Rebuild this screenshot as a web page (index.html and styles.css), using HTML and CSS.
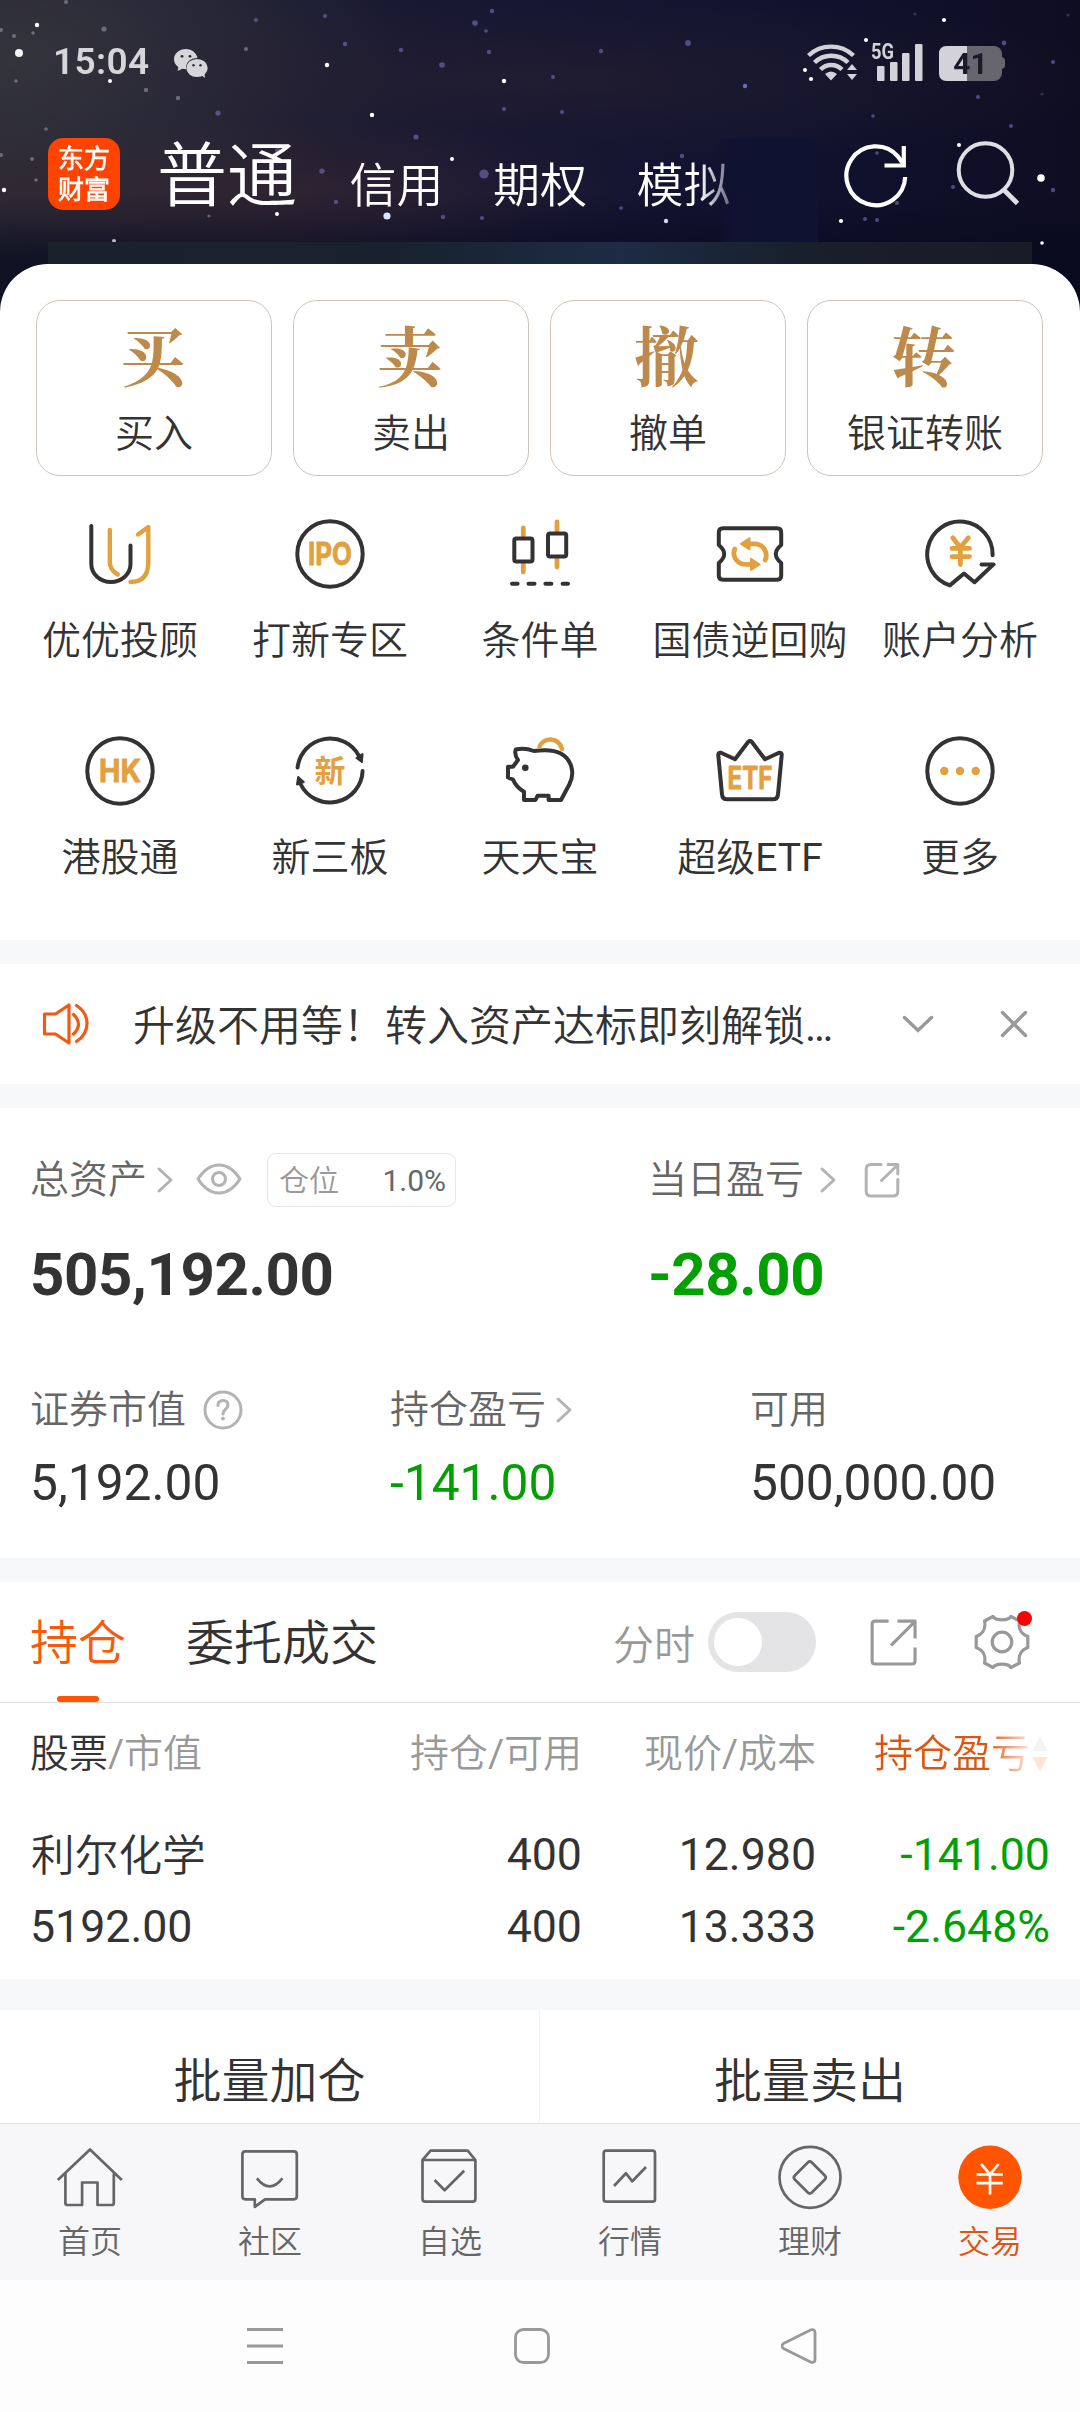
FILE: index.html
```html
<!DOCTYPE html>
<html lang="zh-CN">
<head>
<meta charset="utf-8">
<title>交易</title>
<link rel="stylesheet" href="styles.css">
</head>
<body>
<div class="app">
  <header class="hero">
    <svg class="sky" viewBox="0 0 1080 312" aria-hidden="true">
      <g fill="#fff">
        <circle cx="19" cy="53" r="4" opacity=".95"/><circle cx="37" cy="25" r="2.2"/><circle cx="327" cy="65" r="2.2"/><circle cx="110" cy="81" r="2"/>
        <circle cx="504" cy="81" r="2.2"/><circle cx="372" cy="115" r="2.2"/><circle cx="452" cy="159" r="2"/><circle cx="4" cy="190" r="2.2"/>
        <circle cx="387" cy="216" r="3.6" fill="#dfe6ff"/><circle cx="277" cy="214" r="2"/><circle cx="114" cy="241" r="2" opacity=".7"/>
        <circle cx="944" cy="20" r="2.1"/><circle cx="866" cy="40" r="2"/><circle cx="805" cy="70" r="2"/><circle cx="811" cy="79" r="2.1"/>
        <circle cx="959" cy="145" r="2"/><circle cx="1041" cy="178" r="3.8"/><circle cx="841" cy="221" r="2.1"/><circle cx="666" cy="221" r="2.2" fill="#cdd6ff"/>
        <circle cx="1042" cy="243" r="1.8"/>
      </g>
      <g fill="#7468b4" opacity=".65">
        <circle cx="484" cy="174" r="4.6"/><circle cx="475" cy="23" r="2.8"/><circle cx="688" cy="43" r="3"/><circle cx="442" cy="65" r="2.8"/>
        <circle cx="489" cy="52" r="2.2"/><circle cx="492" cy="11" r="2.2"/><circle cx="486" cy="31" r="1.8"/><circle cx="401" cy="50" r="2.2"/>
        <circle cx="345" cy="44" r="2.2"/><circle cx="325" cy="16" r="2"/><circle cx="256" cy="20" r="2"/><circle cx="416" cy="137" r="2.6"/>
        <circle cx="322" cy="171" r="2.6"/><circle cx="218" cy="113" r="2.6"/><circle cx="504" cy="109" r="2"/><circle cx="443" cy="217" r="2.2"/>
        <circle cx="482" cy="218" r="2"/><circle cx="336" cy="202" r="2.2"/><circle cx="278" cy="151" r="3"/><circle cx="601" cy="51" r="2.2"/>
        <circle cx="553" cy="77" r="2"/><circle cx="745" cy="86" r="2.2" fill="#8fa0ff"/><circle cx="562" cy="112" r="2"/><circle cx="682" cy="156" r="2.2"/>
        <circle cx="621" cy="208" r="1.8"/><circle cx="877" cy="153" r="1.8"/><circle cx="897" cy="203" r="2"/><circle cx="865" cy="219" r="2"/>
        <circle cx="877" cy="220" r="2"/><circle cx="1053" cy="190" r="2.2"/><circle cx="953" cy="187" r="2"/><circle cx="1011" cy="126" r="2"/>
        <circle cx="1053" cy="62" r="2"/><circle cx="1004" cy="43" r="2.4"/><circle cx="978" cy="97" r="2"/><circle cx="873" cy="116" r="1.8"/>
      </g>
      <g fill="#a9a9c4" opacity=".5">
        <circle cx="104" cy="29" r="2.6"/><circle cx="33" cy="33" r="1.8"/><circle cx="14" cy="36" r="2"/><circle cx="246" cy="49" r="2"/>
        <circle cx="16" cy="81" r="1.8"/><circle cx="146" cy="90" r="2.2"/><circle cx="178" cy="98" r="2.2"/><circle cx="46" cy="129" r="1.8"/>
        <circle cx="32" cy="159" r="2"/><circle cx="36" cy="180" r="1.8"/><circle cx="66" cy="2" r="2"/><circle cx="1" cy="30" r="2"/><circle cx="1" cy="155" r="2"/>
        <circle cx="209" cy="216" r="1.6"/><circle cx="915" cy="14" r="1.6" opacity=".5"/><circle cx="1042" cy="94" r="1.6" opacity=".5"/><circle cx="1068" cy="15" r="1.6" opacity=".5"/>
      </g>
    </svg>
    <div class="status">
      <span class="clock">15:04</span>
      <svg class="wechat" width="34" height="29" viewBox="0 0 34 29">
        <path fill="#d6d6da" d="M12 0C5.300 0 0 4.500 0 10.200c0 3.300 1.700 6 4.400 7.900L3.600 22l4.600-2.200c1.300.3 2.500.5 3.900.5C11.500 13 16.500 8.800 23.500 8.900 22.500 4 17.800 0 12 0z"/>
        <ellipse cx="23" cy="19" rx="10.700" ry="9.100" fill="#d6d6da"/><path fill="#d6d6da" d="M26 25l5 4-.8-6z"/>
        <g fill="#2b2932"><circle cx="8" cy="7.300" r="1.400"/><circle cx="16" cy="7.300" r="1.400"/><circle cx="19.500" cy="16.200" r="1.200"/><circle cx="26.500" cy="16.200" r="1.200"/></g>
      </svg>
      <svg class="signals" width="200" height="50" viewBox="0 -10 200 50">
        <g fill="none" stroke="#d2d2d8" stroke-width="4.400">
          <path d="M2.500 13.500a33 33 0 0 1 45 0"/><path d="M8.500 20.500a24 24 0 0 1 33.500 0"/><path d="M14.500 27.500a15 15 0 0 1 21.500 0"/>
        </g>
        <path fill="#d2d2d8" d="M19 32q6-5 12 0l-6 6.500zM41 28l5-6 5 6zM41 32h10l-5 6z"/>
        <text class="net" x="65" y="17" textLength="23" lengthAdjust="spacingAndGlyphs">5G</text>
        <g fill="#d2d2d8"><rect x="71" y="24" width="7.500" height="15" rx="1"/><rect x="84" y="20" width="7.500" height="19" rx="1"/><rect x="96" y="11" width="7.500" height="28" rx="1"/><rect x="109" y="2" width="7.500" height="37" rx="1"/></g>
        <rect x="133" y="4" width="63" height="35" rx="8" fill="#67656e"/><path d="M196 15q3 1 3 3v6q0 2-3 3z" fill="#67656e"/>
        <path d="M141 4h20v35h-20q-8 0-8-8V12q0-8 8-8z" fill="#d2d2d8"/>
        <text class="charge" x="164.500" y="32" text-anchor="middle">41</text>
      </svg>
    </div>
    <div class="topbar">
      <div class="logo"><span>东方</span><span>财富</span></div>
      <nav class="accounts">
        <span class="account-on">普通</span><span>信用</span><span>期权</span><span class="account-fade">模拟</span>
      </nav>
      <svg class="refresh" width="66" height="66" viewBox="0 0 66 66" fill="none" stroke="#fff" stroke-width="4.200">
        <path d="M62.200 35A29.400 29.400 0 1 1 55 14.500l5 7"/><path d="M60.800 4v19.500H41.500"/>
      </svg>
      <svg class="search" width="66" height="66" viewBox="0 0 66 66" fill="none" stroke="#dedee4" stroke-width="4">
        <circle cx="29.500" cy="30" r="26.800"/><path d="M47.500 49.500L61.500 63.500" stroke-width="4.800"/>
      </svg>
    </div>
    <div class="strip"></div>
  </header>

  <main>
    <section class="sheet">
      <div class="cards">
        <div class="card"><b>买</b><span>买入</span></div>
        <div class="card"><b>卖</b><span>卖出</span></div>
        <div class="card"><b>撤</b><span>撤单</span></div>
        <div class="card"><b>转</b><span>银证转账</span></div>
      </div>
      <div class="tools">
        <div class="tool">
          <svg class="ico" viewBox="0 0 72 72"><path d="M7.300 8v38a19.600 18 0 0 0 39.200 0V27.500"/><path class="gold" d="M25.800 12v32q0 8 8 12.500M54 16.500L64.300 9v35q0 20-17.800 20"/></svg>
          <span>优优投顾</span></div>
        <div class="tool">
          <svg class="ico" viewBox="0 0 72 72"><circle cx="36" cy="36" r="32.700"/><text x="36" y="47" text-anchor="middle" textLength="44" lengthAdjust="spacingAndGlyphs">IPO</text></svg>
          <span>打新专区</span></div>
        <div class="tool">
          <svg class="ico" viewBox="0 0 72 72"><path class="gold wide" d="M19.300 10v8M19.300 46v8M53 4v9M53 41v8"/><rect x="10.300" y="20.500" width="18.200" height="23" rx="2"/><rect x="44" y="15.500" width="18.200" height="23" rx="2"/><path d="M8 65.700h5.600M24.500 65.700h6M41.400 65.700h6M58.600 65.700H64"/></svg>
          <span>条件单</span></div>
        <div class="tool">
          <svg class="ico" viewBox="0 0 72 72"><path d="M9 10.200h54q4.200 0 4.200 4.200V27q-10.800 9 0 18v12.600q0 4.200-4.200 4.200H9q-4.200 0-4.200-4.200V45q10.800-9 0-18V14.400q0-4.200 4.200-4.200z"/><path class="gold wide" d="M20.800 31C17.500 39 24 46.300 31 46.300h7M51.200 42C55 33 47.500 25.800 41 25.800h-7"/><path class="fill" d="M27 25.800l8.500-5.500v11zM45.500 46.300L37 40.800v11z"/></svg>
          <span>国债逆回购</span></div>
        <div class="tool">
          <svg class="ico" viewBox="0 0 72 72"><path d="M68.600 37.200A32.700 32.700 0 1 0 25.800 67.400L40 55.500l10.500 8.700 19-17.800H57.500"/><path class="gold wide" d="M28.800 19.800L36.300 29.500 44.300 19.800M28 30.400h17.500M28 38.600h17.500M36.400 30v16.500"/></svg>
          <span>账户分析</span></div>
        <div class="tool">
          <svg class="ico" viewBox="0 0 72 72"><circle cx="36" cy="36" r="32.700"/><text x="36" y="47" text-anchor="middle" textLength="42" lengthAdjust="spacingAndGlyphs">HK</text></svg>
          <span>港股通</span></div>
        <div class="tool">
          <svg class="ico" viewBox="0 0 72 72"><path d="M3.600 32.500A32.700 32.700 0 0 1 65 21M68.600 36A32.700 32.700 0 0 1 6.500 49"/><path class="dark" d="M62.500 23l6-4-.6 8zM3 49.500l1.200-7.500 5.500 5z"/><text class="han" x="36" y="47" text-anchor="middle">新</text></svg>
          <span>新三板</span></div>
        <div class="tool">
          <svg class="ico" viewBox="0 0 72 72"><path d="M14 25q-4-6-2.200-10.500 9-2 18 1.500 18-2.500 27 2.500c11 6 14.500 20 8.500 31L57 65H44.600v-4.200H33.500L31.500 65H20v-8.300Q12 52 9 44.500l-5-2V31.700h5z"/><circle class="dark" cx="21.300" cy="32.700" r="2.300"/><path class="gold" d="M35.500 11.500c4-9.500 19-10 22.500 2.500"/></svg>
          <span>天天宝</span></div>
        <div class="tool">
          <svg class="ico" viewBox="0 0 72 72"><path d="M7 17.800l14 6.500L34.500 6.500q1.500-1.700 3 0L51 24.300l14-6.500q3-.6 2.700 2.500L64 59.500q-.5 4.800-5 4.800H13q-4.500 0-5-4.800L4.300 20.300Q4 17.200 7 17.800z"/><text x="36" y="54" text-anchor="middle" textLength="45" lengthAdjust="spacingAndGlyphs">ETF</text></svg>
          <span>超级ETF</span></div>
        <div class="tool">
          <svg class="ico" viewBox="0 0 72 72"><circle cx="36" cy="36" r="32.700"/><g class="fill"><circle cx="20.300" cy="36" r="3.200"/><circle cx="36" cy="36" r="3.200"/><circle cx="51.700" cy="36" r="3.200"/></g></svg>
          <span>更多</span></div>
      </div>
    </section>

    <section class="notice">
      <svg width="48" height="44" viewBox="0 0 48 44" fill="none" stroke="#f05a14" stroke-width="3.200" stroke-linejoin="round" stroke-linecap="round"><path d="M2.500 12h11L27 3v38L13.500 32h-11zM31.500 12.500q10 9.500 0 19.500M34.500 3.500c14 9 14 27 0 36"/></svg>
      <p>升级不用等！转入资产达标即刻解锁…</p>
      <svg class="more" width="34" height="20" viewBox="0 0 34 20"><path d="M3.500 3.500L17 16.500l13.500-13"/></svg>
      <svg width="30" height="30" viewBox="0 0 30 30"><path d="M3.500 3.500l23 23M26.500 3.500l-23 23"/></svg>
    </section>

    <section class="assets">
      <div class="totals">
        <div>
          <div class="label">总资产
            <svg class="chev" width="18" height="28" viewBox="0 0 18 28"><path d="M3 3l12 11L3 25"/></svg>
            <svg class="eye" width="48" height="34" viewBox="0 0 48 34"><path d="M3 17Q12 3 24 3t21 14Q36 31 24 31T3 17z"/><circle cx="24" cy="17" r="6.500"/></svg>
            <span class="ratio"><i>仓位</i><em>1.0%</em></span>
          </div>
          <div class="big">505,192.00</div>
        </div>
        <div>
          <div class="label">当日盈亏
            <svg class="chev wide-gap" width="18" height="28" viewBox="0 0 18 28"><path d="M3 3l12 11L3 25"/></svg>
            <svg class="share" width="36" height="36" viewBox="0 0 36 36"><path d="M17 2.500H7q-4.800 0-4.800 4.800v22q0 4.800 4.800 4.800h22q4.800 0 4.800-4.800V17.500M24 2.500h9.800V12M33 3.500L17.500 18.500"/></svg>
          </div>
          <div class="big down">-28.00</div>
        </div>
      </div>
      <div class="details">
        <div>
          <div class="label small">证券市值
            <svg class="help" width="40" height="40" viewBox="0 0 40 40"><circle cx="20" cy="20" r="18"/><path d="M15 15.500q0-5 5-5t5 4.500c0 4-5 4.500-5 9"/><circle class="dot" cx="20" cy="28.500" r="1.900"/></svg>
          </div>
          <div class="value">5,192.00</div>
        </div>
        <div>
          <div class="label small">持仓盈亏
            <svg class="chev" width="18" height="28" viewBox="0 0 18 28"><path d="M3 3l12 11L3 25"/></svg>
          </div>
          <div class="value down">-141.00</div>
        </div>
        <div>
          <div class="label small">可用</div>
          <div class="value">500,000.00</div>
        </div>
      </div>
    </section>

    <section class="holdings">
      <div class="tabs">
        <span class="tab tab-on">持仓</span>
        <span class="tab">委托成交</span>
        <span class="chart-label">分时</span>
        <span class="switch"></span>
        <svg class="export" width="48" height="48" viewBox="0 0 48 48"><path d="M19 2.200H5.200q-3 0-3 3V43q0 3 3 3H43q3 0 3-3V29M28 2.200h18V20M45 3.500L21.500 27"/></svg>
        <span class="gear">
          <svg width="56" height="56" viewBox="0 0 56 56"><path d="M19 2.500C22 7 34 7 37 2.500L45.500 7C44 14 47 20 53.800 22.500v11C47 36 44 42 45.500 49L37 53.500c-3-4.500-15-4.500-18 0L10.500 49C12 42 9 36 2.200 33.500v-11C9 20 12 14 10.500 7z"/><circle cx="28" cy="28" r="9.800"/></svg>
          <span class="badge"></span>
        </span>
      </div>
      <div class="table">
        <div class="row head">
          <span><strong>股票</strong>/市值</span><span>持仓/可用</span><span>现价/成本</span>
          <span class="sorted"><u>持仓盈亏</u><svg width="20" height="36" viewBox="0 0 20 36"><path d="M2 15L10 1l8 14z" fill="#f3f3f4"/><path d="M2 21h16l-8 14z" fill="#ffe4d8"/></svg></span>
        </div>
        <div class="row"><span class="name">利尔化学</span><span>400</span><span>12.980</span><span class="down">-141.00</span></div>
        <div class="row"><span>5192.00</span><span>400</span><span>13.333</span><span class="down">-2.648%</span></div>
      </div>
    </section>

    <section class="actions"><span>批量加仓</span><span>批量卖出</span></section>
  </main>

  <nav class="tabbar">
    <div><svg class="nav" viewBox="0 0 72 72"><path d="M3.800 38L36 7.500 67.800 38M11.400 31.500V61q0 2 2 2h14.700V40.500h15.400V63h14.300q2 0 2-2V31.500"/></svg><span>首页</span></div>
    <div><svg class="nav" viewBox="0 0 72 72"><path d="M11.400 9.300h48.400q3 0 3 3v42q0 3-3 3H31l-10.200 7.500v-7.500h-9.400q-3 0-3-3v-42q0-3 3-3zM22.900 36.300q12.700 16 25.500 0"/></svg><span>社区</span></div>
    <div><svg class="nav" viewBox="0 0 72 72"><path d="M8.500 18l8-9.300h37.200l7.700 9.300v38.700q0 3-3 3H11.500q-3 0-3-3zM8.500 18h52.800M20.600 38l10 10.300 19.600-19.600"/></svg><span>自选</span></div>
    <div><svg class="nav" viewBox="0 0 72 72"><rect x="9.700" y="8.700" width="51.300" height="51" rx="2.500"/><path d="M20 44l12-12.700 6.300 8L52 25"/></svg><span>行情</span></div>
    <div><svg class="nav" viewBox="0 0 72 72"><circle cx="36" cy="35.300" r="30.500"/><path d="M33.800 20.500q2-2 4 0l13 13q2 2 0 4l-13 13q-2 2-4 0l-13-13q-2-2 0-4z"/></svg><span>理财</span></div>
    <div class="nav-on"><svg class="nav" viewBox="0 0 72 72"><circle cx="36" cy="35.300" r="31.700"/><path d="M27 22l9 10.300L44.500 22M22.500 32.300h26.300M22.500 41.200h26.300M36 32v20.500"/></svg><span>交易</span></div>
  </nav>
  <footer class="system">
    <svg width="36" height="36" viewBox="0 0 36 36"><path d="M0 1.500h36M0 18h36M0 34.500h36"/></svg>
    <svg width="36" height="36" viewBox="0 0 36 36"><rect x="1.500" y="1.500" width="33" height="33" rx="8"/></svg>
    <svg width="36" height="36" viewBox="0 0 36 36"><path d="M2.500 15.500L30 1.800q4-1 4 3v26.400q0 4-4 3L2.500 20.500q-3-2.500 0-5z"/></svg>
  </footer>
</div>
</body>
</html>
```
FILE: styles.css
```css
* { box-sizing: border-box; }
body {
  margin: 0;
  background: #fff;
  color: #333;
  font-family: Roboto, "Noto Sans CJK SC DemiLight", "Noto Sans CJK SC", sans-serif;
  font-weight: 400;
}
svg { display: block; flex: none; }
i, em { font-style: normal; }
u { text-decoration: none; }
p { margin: 0; }

.app { width: 1080px; height: 2412px; overflow: hidden; display: flex; flex-direction: column; }

/* header */
.hero {
  position: relative;
  height: 312px;
  margin-bottom: -48px;
  flex: none;
  background:
    radial-gradient(ellipse 420px 70px at 260px 190px, rgba(62, 42, 48, .55), transparent),
    radial-gradient(ellipse 560px 90px at 560px 80px, rgba(42, 34, 46, .55), transparent),
    radial-gradient(ellipse 380px 180px at 20px 60px, rgba(62, 62, 68, .6), transparent),
    linear-gradient(180deg, rgba(9, 10, 30, 0) 62%, rgba(7, 9, 28, .7) 85%),
    linear-gradient(90deg, #262532 0, #151533 48%, #10122f 72%, #0f0d22 100%);
}
.sky { position: absolute; inset: 0; width: 1080px; height: 312px; }
.status { position: relative; height: 84px; padding: 42px 74px 0 53px; display: flex; }
.clock { font-size: 37px; line-height: 40px; font-weight: 600; color: #d6d6da; width: 121px; letter-spacing: .4px; }
.wechat { margin-top: 7px; }
.signals { margin: -10px 0 0 auto; }
.net { font: 700 22px Roboto, sans-serif; fill: #d2d2d8; }
.charge { font: 700 30px Roboto, sans-serif; fill: #1b1a28; }
.topbar { position: relative; height: 158px; padding: 54px 54px 0 48px; display: flex; align-items: flex-start; }
.logo {
  width: 72px; height: 72px; border-radius: 15px; background: #ff4400; color: #fff;
  display: flex; flex-direction: column; justify-content: center; align-items: center;
  font-size: 26px; line-height: 31px; font-weight: 700; padding-top: 2px;
}
.accounts {
  display: flex; align-items: flex-start; width: 661px; height: 104px; margin-left: 37px; margin-right: 25px;
  font-size: 47px; line-height: 72px; padding-top: 12px; color: #fff;
  background: linear-gradient(90deg, transparent 560px, #101231 575px);
}
.accounts span { width: 96px; margin-left: 47.500px; }
.accounts .account-on { font-size: 70px; width: 145px; margin: -9px 0 0; }
.accounts .account-fade { background: linear-gradient(90deg, #fff 62px, #5b5c73 96px); -webkit-background-clip: text; background-clip: text; color: transparent; }
.refresh { margin: 4px 47px 0 0; }
.search { margin-top: 2px; }
.strip { height: 22px; margin: 0 48px; position: relative; background: linear-gradient(90deg, #19212b, #18222e 35%, #1d2b45 58%, #17202c 76%, #191c26); }

/* quick actions */
.sheet { position: relative; height: 676px; background: #fff; border-radius: 48px 48px 0 0; padding-top: 36px; }
.cards { display: grid; grid-template-columns: repeat(4, 1fr); gap: 21px; padding: 0 37px 0 36px; }
.card {
  height: 176px; border: 1px solid #cfc5bb; border-radius: 24px; padding-top: 20px;
  display: flex; flex-direction: column; align-items: center; font-size: 39px; line-height: 40px;
}
.card b { font-family: "Noto Serif CJK SC", "Source Han Serif SC", "Noto Sans CJK SC", serif; font-size: 65px; line-height: 64px; color: #bd8a4b; font-weight: 700; margin: 0 3px 29px 0; }
.tools { display: grid; grid-template-columns: repeat(5, 210px); row-gap: 72px; justify-content: center; margin-top: 42px; }
.tool { display: flex; flex-direction: column; align-items: center; font-size: 39px; line-height: 44px; gap: 29px; white-space: nowrap; }
.ico { width: 72px; height: 72px; fill: none; stroke: #333; stroke-width: 4px; stroke-linecap: round; stroke-linejoin: round; }
.ico .gold { stroke: #e2a03f; stroke-width: 4.400px; }
.ico .wide { stroke-width: 4.800px; }
.ico .fill { fill: #e2a03f; stroke: #e2a03f; stroke-width: 2px; }
.ico .dark { fill: #333; stroke-width: 2px; }
.ico text { font: 700 31px Inter, sans-serif; fill: #e2a03f; stroke: #e2a03f; stroke-width: .8px; }
.ico .han { font: 700 31px "Noto Sans CJK SC", sans-serif; stroke: none; }

/* notice */
.notice { height: 168px; border: solid #f7f8fa; border-width: 24px 0; padding: 0 50px 0 42px; display: flex; align-items: center; font-size: 42px; }
.notice p { width: 767px; padding: 6px 0 0 43px; line-height: 50px; white-space: nowrap; }
.notice .more, .notice .more ~ svg { fill: none; stroke: #999; stroke-width: 3.400px; stroke-linecap: round; }
.notice .more { margin: 0 64px 0 44px; }

/* assets */
.assets { height: 450px; padding-top: 45px; }
.totals, .details { display: grid; padding-left: 30px; }
.totals { grid-template-columns: 618px 1fr; }
.details { grid-template-columns: 360px 360px 1fr; margin-top: 85px; }
.label { display: flex; align-items: center; height: 54px; font-size: 39px; line-height: 54px; color: #666; white-space: nowrap; }
.label svg { fill: none; stroke: #b3b3b3; stroke-width: 3px; stroke-linecap: round; stroke-linejoin: round; }
.chev { margin-left: 9px; }
.chev.wide-gap { margin-left: 15px; }
.eye { margin: -2px 0 0 21px; }
.share { margin-left: 27px; }
.help { margin-left: 17px; }
.label .help .dot { fill: #b3b3b3; stroke: none; }
.ratio { display: flex; justify-content: space-between; width: 189px; height: 54px; margin-left: 24px; padding: 0 9px 0 11px; border: 1px solid #e6e6e6; border-radius: 9px; font-size: 30px; line-height: 53px; }
.ratio i { color: #999; }
.big { margin-top: 38px; font-size: 60px; line-height: 60px; font-weight: 700; letter-spacing: -.400px; }
.small { height: 40px; line-height: 40px; }
.value { margin-top: 28px; font-size: 49.700px; line-height: 50px; }
.down { color: #00a000; }

/* holdings */
.holdings { height: 421px; border-top: 24px solid #f7f8fa; background: #fff; }
.tabs { height: 121px; border-bottom: 1px solid #dedede; padding: 0 50px 0 30px; display: flex; align-items: center; font-size: 48px; }
.tab { position: relative; line-height: 120px; height: 120px; padding-top: 2px; }
.tab + .tab { margin-left: 60px; }
.tab-on { color: #f75a0c; }
.tab-on::after { content: ""; position: absolute; left: 27px; bottom: 0; width: 42px; height: 6px; border-radius: 3px; background: #ff5500; }
.chart-label { margin-left: auto; font-size: 41px; color: #999; }
.switch { width: 108px; height: 60px; border-radius: 30px; background: #e4e4e6; padding: 6px; margin-left: 13px; }
.switch::before { content: ""; display: block; width: 48px; height: 48px; border-radius: 50%; background: #fff; }
.export { width: 47px; height: 47px; margin-left: 54px; }
.gear { position: relative; margin-left: 57px; }
.badge { position: absolute; left: 43px; top: -3px; width: 15px; height: 15px; border-radius: 50%; background: #f00; }
.export, .gear svg { fill: none; stroke: #999; stroke-width: 3.200px; stroke-linejoin: round; }
.row { display: grid; grid-template-columns: 252px 300px 234px 234px; padding-left: 30px; font-size: 44.700px; line-height: 72px; white-space: nowrap; }
.row > span + span { text-align: right; }
.name { font-size: 43.700px; padding: 1px 0 0 1px; height: 72px; }
.head { font-size: 39px; line-height: 40px; color: #999; padding-top: 31px; margin-bottom: 45px; }
.head strong { font-weight: 400; color: #333; }
.sorted { display: flex; justify-content: flex-end; align-items: center; }
.sorted u { background: linear-gradient(90deg, #dd5511 112px, #ffe4d8 156px); -webkit-background-clip: text; background-clip: text; color: transparent; }

/* batch actions */
.actions { height: 144px; border-top: 31px solid #f7f8fa; display: grid; grid-template-columns: 1fr 1fr; text-align: center; font-size: 48px; line-height: 48px; }
.actions span { padding-top: 48px; }
.actions span:first-child { border-right: 1px solid #f3f3f5; }

/* bottom tabs */
.tabbar { height: 157px; flex: none; background: #f7f7fa; border-top: 1px solid #e0e0e2; display: grid; grid-template-columns: repeat(6, 1fr); padding-top: 18px; color: #666; font-size: 32px; line-height: 36px; }
.tabbar div { display: flex; flex-direction: column; align-items: center; gap: 10px; }
.nav { width: 72px; height: 72px; fill: none; stroke: #666; stroke-width: 2.700px; stroke-linejoin: round; }
.nav-on { color: #dd5511; }
.nav-on circle { fill: #ff5500; stroke: none; }
.nav-on path { stroke: #fff; }
.system { height: 132px; flex: none; background: #fdfdfd; padding-left: 247px; display: flex; align-items: center; gap: 231px; }
.system svg { fill: none; stroke: #999; stroke-width: 2.800px; }
```
